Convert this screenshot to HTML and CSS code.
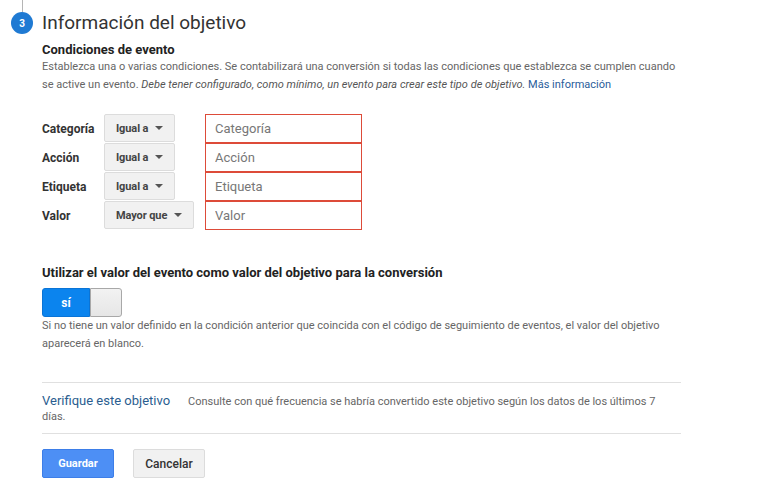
FILE: index.html
```html
<!DOCTYPE html>
<html lang="es">
<head>
<meta charset="utf-8">
<title>Información del objetivo</title>
<link rel="stylesheet" href="styles.css">
</head>
<body>
<div class="page">
  <div class="stepline"></div>
  <div class="step-head">
    <span class="step-num">3</span>
    <h1 class="title">Información del objetivo</h1>
  </div>
  <div class="content">
    <h2 class="subhead">Condiciones de evento</h2>
    <p class="desc">Establezca una o varias condiciones. Se contabilizará una conversión si todas las condiciones que establezca se cumplen cuando se active un evento. <em>Debe tener configurado, como mínimo, un evento para crear este tipo de objetivo.</em> <a class="link" href="#">Más información</a></p>

    <div class="conds">
      <span class="cond-label">Categoría</span>
      <span class="dropdown">Igual a<i class="caret"></i></span>
      <input class="cond-input" type="text" placeholder="Categoría">

      <span class="cond-label">Acción</span>
      <span class="dropdown">Igual a<i class="caret"></i></span>
      <input class="cond-input" type="text" placeholder="Acción">

      <span class="cond-label">Etiqueta</span>
      <span class="dropdown">Igual a<i class="caret"></i></span>
      <input class="cond-input" type="text" placeholder="Etiqueta">

      <span class="cond-label">Valor</span>
      <span class="dropdown">Mayor que<i class="caret"></i></span>
      <input class="cond-input" type="text" placeholder="Valor">
    </div>

    <h2 class="subhead value-head">Utilizar el valor del evento como valor del objetivo para la conversión</h2>
    <div class="toggle"><span class="toggle-on">sí</span><span class="toggle-off"></span></div>
    <p class="desc help">Si no tiene un valor definido en la condición anterior que coincida con el código de seguimiento de eventos, el valor del objetivo aparecerá en blanco.</p>

    <div class="verify">
      <p class="verify-text"><a class="verify-link" href="#">Verifique este objetivo</a>Consulte con qué frecuencia se habría convertido este objetivo según los datos de los últimos 7 días.</p>
    </div>

    <div class="actions">
      <button class="btn btn-primary" type="button">Guardar</button>
      <button class="btn btn-default" type="button">Cancelar</button>
    </div>
  </div>
</div>
</body>
</html>
```

FILE: styles.css
```css
* { box-sizing: border-box; }

html, body {
  margin: 0;
  padding: 0;
  background: #ffffff;
}

body {
  font-family: Roboto, "Liberation Sans", Arial, sans-serif;
  color: #333333;
}

.page {
  width: 760px;
}

.stepline {
  width: 1px;
  height: 12px;
  margin-left: 22px;
  background: #b5b5b5;
}

.step-head {
  display: flex;
  align-items: center;
  padding-left: 11px;
  height: 22px;
}

.step-num {
  width: 22px;
  height: 22px;
  border-radius: 50%;
  background: #1f7ad3;
  color: #ffffff;
  font-size: 10px;
  font-weight: 700;
  display: flex;
  align-items: center;
  justify-content: center;
  flex: none;
}

.title {
  margin: 0 0 0 9px;
  font-size: 19px;
  font-weight: 400;
  line-height: 22px;
  color: #333333;
}

.content {
  padding-left: 42px;
  width: 681px;
}

.subhead {
  margin: 8px 0 0 0;
  font-size: 13px;
  font-weight: 700;
  line-height: 16px;
  color: #222222;
}

.desc {
  margin: 0;
  font-size: 11px;
  line-height: 18px;
  color: #666666;
}

.desc em {
  font-style: italic;
  color: #555555;
}

.link {
  color: #2a5d9a;
  text-decoration: none;
}

.conds {
  margin-top: 20px;
  display: grid;
  grid-template-columns: 62px 101px 157px;
  grid-auto-rows: 29px;
}

.cond-label {
  align-self: center;
  font-size: 12px;
  font-weight: 700;
  color: #333333;
}

.dropdown {
  justify-self: start;
  align-self: start;
  height: 28px;
  display: inline-flex;
  align-items: center;
  gap: 7px;
  padding: 0 11px 0 11px;
  background: #f1f1f1;
  border: 1px solid #dcdcdc;
  border-radius: 2px;
  font-size: 11px;
  font-weight: 700;
  color: #444444;
  letter-spacing: -0.1px;
}

.caret {
  width: 0;
  height: 0;
  border-left: 4px solid transparent;
  border-right: 4px solid transparent;
  border-top: 4px solid #555555;
}

.cond-input {
  width: 157px;
  height: 29px;
  margin: 0;
  padding: 0 9px;
  border: 1px solid #dd4b39;
  border-radius: 0;
  font-family: Roboto, "Liberation Sans", Arial, sans-serif;
  font-size: 13px;
  color: #333333;
  background: #ffffff;
  outline: none;
}

.cond-input::placeholder {
  color: #777777;
}

.value-head {
  margin-top: 35px;
}

.toggle {
  margin-top: 7px;
  display: flex;
  width: 80px;
  height: 29px;
}

.toggle-on {
  width: 48px;
  background: #0b84ee;
  border: 1px solid #0a74d6;
  border-radius: 3px 0 0 3px;
  color: #ffffff;
  font-size: 12px;
  font-weight: 700;
  display: flex;
  align-items: center;
  justify-content: center;
}

.toggle-off {
  flex: 1;
  background: linear-gradient(#f2f2f2, #e6e6e6);
  border: 1px solid #a8a8a8;
  border-radius: 0 3px 3px 0;
}

.help {
  margin-top: 0;
}

.verify {
  margin-top: 29px;
  border-top: 1px solid #e0e0e0;
  border-bottom: 1px solid #e0e0e0;
  padding: 10px 0 9px 0;
  width: 639px;
}

.verify-text {
  margin: 0;
  font-size: 11px;
  line-height: 15px;
  color: #666666;
}

.verify-link {
  font-size: 13px;
  line-height: 15px;
  color: #2a5d8f;
  text-decoration: none;
  padding-right: 18px;
}

.actions {
  margin-top: 15px;
  display: flex;
  gap: 19px;
}

.btn {
  width: 72px;
  height: 29px;
  margin: 0;
  padding: 0;
  border-radius: 2px;
  font-family: Roboto, "Liberation Sans", Arial, sans-serif;
  cursor: pointer;
}

.btn-primary {
  background: #4d8ff5;
  border: 1px solid #3d7ee8;
  color: #ffffff;
  font-size: 11px;
  font-weight: 700;
}

.btn-default {
  background: #f1f1f1;
  border: 1px solid #dcdcdc;
  color: #333333;
  font-size: 12px;
  font-weight: 500;
}
```
